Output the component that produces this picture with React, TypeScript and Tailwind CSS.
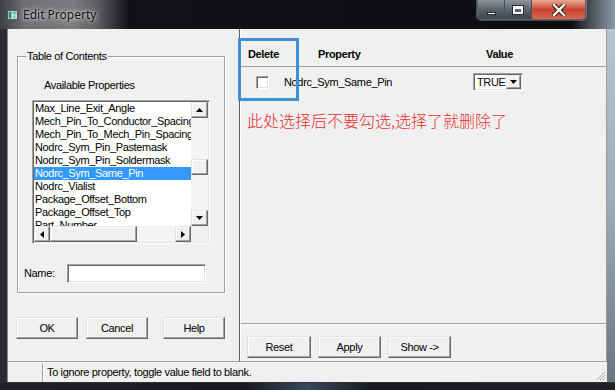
import React from "react";

const properties = [
  "Max_Line_Exit_Angle",
  "Mech_Pin_To_Conductor_Spacing",
  "Mech_Pin_To_Mech_Pin_Spacing",
  "Nodrc_Sym_Pin_Pastemask",
  "Nodrc_Sym_Pin_Soldermask",
  "Nodrc_Sym_Same_Pin",
  "Nodrc_Vialist",
  "Package_Offset_Bottom",
  "Package_Offset_Top",
  "Part_Number",
];

const selectedProperty = "Nodrc_Sym_Same_Pin";

// classic 3d edges
const raised =
  "border border-t-[#e3e3e3] border-l-[#e3e3e3] border-r-[#696969] border-b-[#696969] shadow-[inset_-1px_-1px_0_#a0a0a0,inset_1px_1px_0_#ffffff] bg-[#f0f0f0]";
const sunken =
  "border border-t-[#a0a0a0] border-l-[#a0a0a0] border-r-white border-b-white shadow-[inset_1px_1px_0_#696969,inset_-1px_-1px_0_#e3e3e3]";

const Arrow = ({ dir }: { dir: "up" | "down" | "left" | "right" }) => {
  const points = {
    up: "0,4 3.5,0 7,4",
    down: "0,0 7,0 3.5,4",
    left: "4,0 4,7 0,3.5",
    right: "0,0 0,7 4,3.5",
  }[dir];
  const vertical = dir === "up" || dir === "down";
  return (
    <svg width={vertical ? 7 : 4} height={vertical ? 4 : 7} viewBox={vertical ? "0 0 7 4" : "0 0 4 7"}>
      <polygon points={points} fill="#000" />
    </svg>
  );
};

const PushButton = ({ label, className }: { label: string; className: string }) => (
  <button type="button" className={`${raised} ${className} flex items-center justify-center text-[11px] text-black`}>
    {label}
  </button>
);

const CaptionButtons = () => (
  <div className="mr-[29px] flex h-[20px] overflow-hidden rounded-b-[4px] border border-t-0 border-[#5d646e] shadow-[0_0_0_1px_rgba(255,255,255,0.25)]">
    <div className="flex w-[27px] items-center justify-center border-r border-[#4a5058] bg-gradient-to-b from-[#8e949c] via-[#5e646c] to-[#3e444c]">
      <div className="mt-[7px] h-[3px] w-[9px] border border-[#2a2a2a] bg-white" />
    </div>
    <div className="flex w-[27px] items-center justify-center border-r border-[#4a5058] bg-gradient-to-b from-[#8e949c] via-[#5e646c] to-[#3e444c]">
      <div className="h-[8px] w-[10px] border-[2px] border-t-[3px] border-white shadow-[0_0_0_1px_#2a2a2a]" />
    </div>
    <div className="flex w-[53px] items-center justify-center bg-gradient-to-b from-[#e8a899] via-[#c9452e] to-[#d8674f]">
      <svg width="14" height="12" viewBox="0 0 14 12">
        <path d="M2 1 L12 11 M12 1 L2 11" stroke="#3a1a14" strokeWidth="4.5" strokeLinecap="square" />
        <path d="M2 1 L12 11 M12 1 L2 11" stroke="#ffffff" strokeWidth="2.4" strokeLinecap="square" />
      </svg>
    </div>
  </div>
);

const ListBox = () => (
  <div className={`${sunken} flex h-[144px] w-[178px] flex-col bg-white p-[1px]`}>
    <div className="flex h-[124px]">
      <div className="w-[157px] overflow-hidden">
        {properties.map((name) => (
          <div
            key={name}
            className={`h-[13px] whitespace-nowrap pl-[1px] leading-[13px] ${
              name === selectedProperty ? "bg-[#3399ff] text-white" : "text-black"
            }`}
          >
            {name}
          </div>
        ))}
      </div>
      <div className="flex w-[17px] flex-col bg-[#f4f4f4]">
        <div className={`${raised} flex h-[16px] items-center justify-center`}>
          <Arrow dir="up" />
        </div>
        <div className="flex-1 pt-[41px]">
          <div className={`${raised} h-[16px]`} />
        </div>
        <div className={`${raised} flex h-[16px] items-center justify-center`}>
          <Arrow dir="down" />
        </div>
      </div>
    </div>
    <div className="flex h-[16px]">
      <div className="flex w-[157px] bg-[#f4f4f4]">
        <div className={`${raised} flex w-[16px] items-center justify-center`}>
          <Arrow dir="left" />
        </div>
        <div className={`${raised} w-[87px]`} />
        <div className="flex-1" />
        <div className={`${raised} flex w-[16px] items-center justify-center`}>
          <Arrow dir="right" />
        </div>
      </div>
      <div className="w-[17px] bg-[#f0f0f0]" />
    </div>
  </div>
);

export default function App() {
  return (
    <div className="relative flex h-[390px] w-[615px] flex-col overflow-hidden bg-[#16181c] font-['Liberation_Sans',Arial,sans-serif] text-[11px] leading-[13px] tracking-[-0.35px] text-black">
      {/* title bar */}
      <div className="flex h-[29px] items-start justify-between bg-[linear-gradient(to_right,#3c3e42_0%,#6e7074_4%,#7a7c80_12%,#5a5c60_16%,#101216_21%,#0b0d11_93%,#4a5058_96%,#8d99a6_100%)]">
        <div className="flex items-center gap-[5px] pl-[7px] pt-[8px]">
          <svg width="11" height="10" viewBox="0 0 11 10">
            <rect x="0.5" y="0.5" width="10" height="9" fill="#e8eef0" stroke="#4a5a60" />
            <rect x="1.5" y="1.5" width="3" height="7" fill="#2f8f7c" />
            <rect x="5.5" y="1.5" width="4" height="3" fill="#6cb7c9" />
            <rect x="5.5" y="5.5" width="4" height="3" fill="#93c9a9" />
          </svg>
          <span className="text-[12px] tracking-normal text-[#111] [text-shadow:0_0_6px_#d8d8d8,0_0_3px_#e8e8e8] font-['Noto_Sans',Arial,sans-serif] leading-[14px]">
            Edit Property
          </span>
        </div>
        <CaptionButtons />
      </div>

      <div className="flex flex-1">
        {/* left frame */}
        <div className="w-[8px] border-r border-[#8a8a8a] bg-[#2a2c30]" />

        {/* client */}
        <div className="flex flex-1 flex-col bg-[#f0f0f0]">
          <div className="flex flex-1">
            {/* left panel */}
            <div className="flex w-[231px] flex-col pl-[9px]">
              <div className="relative mt-[27px] h-[237px] w-[208px] border border-[#a0a0a0] shadow-[inset_1px_1px_0_#ffffff,1px_1px_0_#ffffff]">
                <span className="absolute -top-[7px] left-[8px] bg-[#f0f0f0] px-[1px]">
                  Table of Contents
                </span>
                <div className="flex flex-col pl-[14px] pt-[22px]">
                  <span className="pl-[12px]">Available Properties</span>
                  <div className="mt-[8px]">
                    <ListBox />
                  </div>
                  <div className="mt-[20px] flex items-center">
                    <span className="-ml-[8px] w-[35px]">Name:</span>
                    <div className={`${sunken} ml-[8px] h-[19px] w-[139px] bg-white`} />
                  </div>
                </div>
              </div>
              <div className="mt-[24px] flex">
                <PushButton label="OK" className="ml-[-1px] h-[22px] w-[62px]" />
                <PushButton label="Cancel" className="ml-[8px] h-[22px] w-[62px]" />
                <PushButton label="Help" className="ml-[15px] h-[22px] w-[62px]" />
              </div>
            </div>

            {/* splitter */}
            <div className="w-[1px] bg-[#5f5f5f]" />

            {/* right panel */}
            <div className="flex flex-1 flex-col border-l border-r border-l-white border-r-[#9a9a9a]">
              <div className="flex h-[38px] items-end border-b border-[#a0a0a0] pb-[5px] font-bold">
                <span className="ml-[7px] w-[70px]">Delete</span>
                <span className="w-[168px]">Property</span>
                <span>Value</span>
              </div>
              <div className="flex flex-1 flex-col">
                <div className="flex h-[29px] items-center pt-[1px]">
                  <div className={`${sunken} ml-[15px] h-[13px] w-[13px] bg-white`} />
                  <span className="ml-[15px] w-[189px]">Nodrc_Sym_Same_Pin</span>
                  <div className={`${sunken} flex h-[18px] w-[50px] items-center bg-white p-[1px]`}>
                    <span className="flex-1 pl-[2px] leading-[14px]">TRUE</span>
                    <div className={`${raised} flex h-[14px] w-[15px] items-center justify-center`}>
                      <Arrow dir="down" />
                    </div>
                  </div>
                </div>
                <div className="ml-[6px] mt-[13px] font-['Noto_Sans_CJK_SC',sans-serif] text-[16px] font-light leading-[22px] tracking-normal text-[#e62e2b]">
                  此处选择后不要勾选,选择了就删除了
                </div>
              </div>
              <div className="flex h-[38px] border-t border-[#a0a0a0] pt-[12px] shadow-[inset_0_1px_0_#ffffff]">
                <PushButton label="Reset" className="ml-[6px] h-[22px] w-[64px]" />
                <PushButton label="Apply" className="ml-[7px] h-[22px] w-[63px]" />
                <PushButton label="Show ->" className="ml-[7px] h-[22px] w-[63px]" />
              </div>
            </div>
          </div>

          {/* status bar */}
          <div className="flex h-[21px] border-t border-[#a0a0a0] pt-[2px]">
            <div className="w-[35px] border-r border-[#a0a0a0]" />
            <div className="flex-1 border-l border-white pl-[3px] leading-[17px]">
              To ignore property, toggle value field to blank.
            </div>
            <svg width="11" height="11" viewBox="0 0 11 11" className="mr-[1px] mt-[6px]">
              <path d="M10 2 L2 10 M10 5 L5 10 M10 8 L8 10" stroke="#a0a0a0" strokeWidth="1" />
              <path d="M10 3 L3 10 M10 6 L6 10 M10 9 L9 10" stroke="#ffffff" strokeWidth="1" />
            </svg>
          </div>
        </div>

        {/* right frame */}
        <div className="w-[8px] bg-gradient-to-b from-[#b8c4cf] via-[#9eabb8] to-[#6c7680]" />
      </div>

      {/* bottom frame */}
      <div className="h-[8px] border-t border-[#2e3034] bg-[linear-gradient(to_right,#202226_0%,#181a1e_40%,#3a4a5c_50%,#181a1e_60%,#202226_100%)]" />

      {/* annotation */}
      <div className="absolute left-[238px] top-[38px] h-[63px] w-[61px] border-[3px] border-[#3d8fd6]" />
    </div>
  );
}
